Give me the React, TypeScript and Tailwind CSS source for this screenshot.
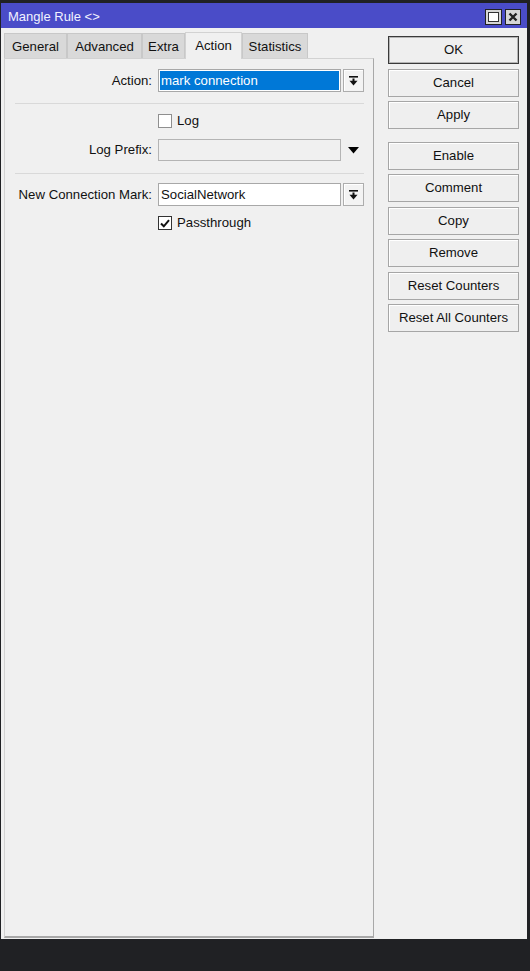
import React from 'react'

const font = { fontFamily: '"Liberation Sans", Arial, sans-serif' }

function DropIcon() {
  return (
    <svg width="9" height="10" viewBox="0 0 9 10">
      <rect x="0" y="0" width="9" height="1.6" fill="#111" />
      <rect x="3.5" y="2.5" width="2" height="2.5" fill="#111" />
      <polygon points="0.5,4.8 8.5,4.8 4.5,9.5" fill="#111" />
    </svg>
  )
}

function DropButton() {
  return (
    <div className="w-[21px] h-full border border-[#adadad] bg-[#f3f3f3] flex items-center justify-center shadow-[inset_1px_1px_0_#fff]">
      <DropIcon />
    </div>
  )
}

function Checkbox({ checked }: { checked?: boolean }) {
  return (
    <div className={`w-[14px] h-[14px] border bg-white flex items-center justify-center ${checked ? 'border-[#333]' : 'border-[#8f8f8f]'}`}>
      {checked && (
        <svg width="10" height="9" viewBox="0 0 10 9">
          <path d="M1 4.5 L3.8 7.3 L9 1.2" stroke="#111" strokeWidth="2" fill="none" />
        </svg>
      )}
    </div>
  )
}

function Btn({ label, primary }: { label: string; primary?: boolean }) {
  return (
    <div
      className={`h-[28px] flex items-center justify-center bg-[#efefef] text-[13.2px] text-[#111] ${
        primary ? 'border border-[#3a3a3a] shadow-[inset_0_0_0_1px_#b5b5b5]' : 'border border-[#a6a6a6] shadow-[inset_1px_1px_0_#fff]'
      }`}
    >
      {label}
    </div>
  )
}

const tabs = [
  { name: 'General', w: 'w-[63px]' },
  { name: 'Advanced', w: 'w-[75px]' },
  { name: 'Extra', w: 'w-[43px]' },
  { name: 'Action', w: 'w-[57px]', active: true },
  { name: 'Statistics', w: 'w-[66px]' },
]

export default function App() {
  return (
    <div className="w-[530px] h-[971px] bg-[#202124] pt-[3px] pl-[1px]" style={font}>
      <div className="w-[526px] h-[936px] bg-[#f0f0f0] flex flex-col">
        {/* title bar */}
        <div className="h-[25px] bg-[#4a4cc8] flex items-center pl-[7px] pr-[6px]">
          <span className="text-[13px] text-[#f2f2ff] flex-1 pt-[3px]">Mangle Rule &lt;&gt;</span>
          <div className="flex gap-[3px] mt-[3px]">
            <div className="w-[17px] h-[16px] bg-[#d6d6d6] border border-[#222] flex items-center justify-center">
              <div className="w-[11px] h-[10px] border-[1.5px] border-[#333] bg-white" />
            </div>
            <div className="w-[16px] h-[16px] bg-[#d6d6d6] border border-[#222] flex items-center justify-center">
              <svg width="10" height="10" viewBox="0 0 10 10">
                <path d="M1.5 1.5 L8.5 8.5 M8.5 1.5 L1.5 8.5" stroke="#222" strokeWidth="2.4" />
              </svg>
            </div>
          </div>
        </div>

        <div className="flex flex-1">
          {/* left: tabs + panel */}
          <div className="flex flex-col pl-[3px] w-[373px]">
            <div className="h-[30px] flex items-end">
              {tabs.map((t) =>
                t.active ? (
                  <div
                    key={t.name}
                    className={`${t.w} h-[27px] bg-[#f0f0f0] border border-b-0 border-[#d2d2d2] flex items-center justify-center text-[13.2px] text-[#111] -mb-[1px] relative z-10`}
                  >
                    {t.name}
                  </div>
                ) : (
                  <div
                    key={t.name}
                    className={`${t.w} h-[25px] bg-[#d9d9d9] border border-b-0 border-[#c8c8c8] flex items-center justify-center pt-[2px] text-[13.2px] text-[#111]`}
                  >
                    {t.name}
                  </div>
                )
              )}
            </div>

            <div className="h-[880px] border border-[#d2d2d2] border-r-[#a8a8a8] border-b-[#a8a8a8] border-b-2 text-[13.2px] text-[#111]">
              <div className="flex flex-col">
                {/* Action */}
                <div className="mt-[10px] h-[23px] flex">
                  <div className="w-[148px] pr-[1px] flex items-center justify-end">Action:</div>
                  <div className="ml-[5px] w-[183px] border border-[#a8a8a8] bg-white p-[1px]">
                    <div className="h-full bg-[#0078d7] text-white flex items-center pl-[1px]">mark connection</div>
                  </div>
                  <div className="ml-[2px]">
                    <DropButton />
                  </div>
                </div>

                <div className="mt-[11px] ml-[10px] w-[349px] h-[1px] bg-[#d9d9d9]" />

                {/* Log */}
                <div className="mt-[10px] h-[14px] flex items-center">
                  <div className="w-[153px]" />
                  <Checkbox />
                  <span className="ml-[5px]">Log</span>
                </div>

                {/* Log Prefix */}
                <div className="mt-[11px] h-[22px] flex">
                  <div className="w-[148px] pr-[1px] flex items-center justify-end">Log Prefix:</div>
                  <div className="ml-[5px] w-[183px] border border-[#b4b4b4] bg-[#f0f0f0]" />
                  <div className="ml-[2px] w-[21px] flex items-center justify-center">
                    <svg width="11" height="7" viewBox="0 0 11 7">
                      <polygon points="0,0 11,0 5.5,6.5" fill="#000" />
                    </svg>
                  </div>
                </div>

                <div className="mt-[12px] ml-[10px] w-[349px] h-[1px] bg-[#d9d9d9]" />

                {/* New Connection Mark */}
                <div className="mt-[9px] h-[23px] flex">
                  <div className="w-[148px] pr-[1px] flex items-center justify-end whitespace-nowrap">New Connection Mark:</div>
                  <div className="ml-[5px] w-[183px] border border-[#a8a8a8] bg-white flex items-center pl-[2px]">
                    SocialNetwork
                  </div>
                  <div className="ml-[2px]">
                    <DropButton />
                  </div>
                </div>

                {/* Passthrough */}
                <div className="mt-[10px] h-[14px] flex items-center">
                  <div className="w-[153px]" />
                  <Checkbox checked />
                  <span className="ml-[5px]">Passthrough</span>
                </div>
              </div>
            </div>
          </div>

          {/* right: buttons */}
          <div className="ml-[14px] w-[131px] pt-[8px] flex flex-col gap-[4.5px]">
            <Btn label="OK" primary />
            <Btn label="Cancel" />
            <Btn label="Apply" />
            <div className="mt-[8px]">
              <Btn label="Enable" />
            </div>
            <Btn label="Comment" />
            <Btn label="Copy" />
            <Btn label="Remove" />
            <Btn label="Reset Counters" />
            <Btn label="Reset All Counters" />
          </div>
        </div>
      </div>
    </div>
  )
}
